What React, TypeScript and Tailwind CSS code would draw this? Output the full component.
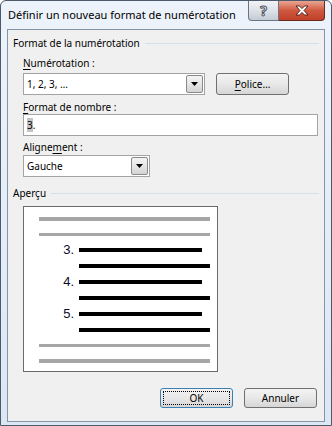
import React from 'react'

function Underline({ children }: { children: React.ReactNode }) {
  return <span className="underline underline-offset-2">{children}</span>
}

function DropArrow() {
  return (
    <div className="flex h-full w-[17px] items-center justify-center rounded-[2px] border border-[#8a8a8a] bg-gradient-to-b from-[#f4f4f4] via-[#e6e6e6] to-[#d4d4d4]">
      <svg width="7" height="4" viewBox="0 0 7 4">
        <path d="M0 0h7L3.5 4z" fill="#000" />
      </svg>
    </div>
  )
}

function Combo({ value, className }: { value: string; className: string }) {
  return (
    <div className={`flex h-[22px] items-stretch border border-[#a3a3a3] bg-white ${className}`}>
      <div className="flex flex-1 items-center pl-[3px]">{value}</div>
      <div className="py-px pr-px">
        <DropArrow />
      </div>
    </div>
  )
}

function GroupHeader({ title }: { title: string }) {
  return (
    <div className="flex h-4 items-center gap-[5px] leading-4">
      <span className="whitespace-nowrap">{title}</span>
      <div className="h-px flex-1 bg-[#d5dfe5]" />
    </div>
  )
}

function Bar({ tone }: { tone: 'gray' | 'black' }) {
  const color = tone === 'gray' ? 'bg-[#a6a6a6]' : 'bg-black'
  return <div className={`h-1 ${color}`} />
}

function NumberedRow({ n }: { n: number }) {
  return (
    <>
      <div className="flex h-1 items-center">
        <span className="w-[40px] pr-[5px] text-right font-['Liberation_Sans',sans-serif] text-[13px] leading-4 text-[#0c0c24]">
          {n}.
        </span>
        <div className="mr-2 h-1 flex-1 bg-black" />
      </div>
      <div className="ml-[40px] h-1 bg-black" />
    </>
  )
}

function WinButton({ children, focused }: { children: React.ReactNode; focused?: boolean }) {
  return (
    <div
      className={`flex h-[20px] w-[73px] items-center justify-center rounded-[3px] border bg-gradient-to-b from-[#f3f3f3] via-[#e8e8e8] to-[#d6d6d6] ${
        focused ? 'border-[#3c7fb1] p-[2px]' : 'border-[#707070]'
      }`}
    >
      {focused ? (
        <div className="flex h-full w-full items-center justify-center border border-dotted border-black">
          {children}
        </div>
      ) : (
        children
      )}
    </div>
  )
}

export default function App() {
  return (
    <div className="h-[426px] w-[332px] bg-white font-['Noto_Sans',sans-serif] text-[10px] text-black">
      <div className="flex h-full w-full flex-col rounded-t-[6px] border border-[#4c5a6b] bg-gradient-to-b from-[#edf3fb] to-[#dce7f4] px-[6px] pb-[3px]">
        {/* Title bar */}
        <div className="flex h-[28px] items-start justify-between">
          <div className="whitespace-nowrap pl-px pt-[6px] text-[11px] leading-4">
            Définir un nouveau format de numérotation
          </div>
          <div className="flex">
            <div className="flex h-[20px] w-[31px] items-center justify-center rounded-bl-[4px] border border-t-0 border-[#6a7684] bg-gradient-to-b from-[#f1f3f6] via-[#dde2e8] to-[#c3cbd5] text-[14px] font-bold leading-none text-white [-webkit-text-stroke:1px_#4a5260]">
              ?
            </div>
            <div className="flex h-[20px] w-[46px] items-center justify-center rounded-br-[4px] border border-l-0 border-t-0 border-[#6b2a20] bg-gradient-to-b from-[#e9a593] via-[#d0583f] to-[#c0402a]">
              <svg width="14" height="11" viewBox="0 0 14 11">
                <path
                  d="M1 1h3.5L7 3.6 9.5 1H13L9 5.5 13 10H9.5L7 7.4 4.5 10H1L5 5.5z"
                  fill="#fff"
                  stroke="#4a1a14"
                  strokeWidth="0.9"
                  strokeLinejoin="round"
                />
              </svg>
            </div>
          </div>
        </div>

        {/* Client area */}
        <div className="flex flex-1 flex-col border border-[#8595a8] bg-[#f0f0f0] px-[5px] pt-[5px]">
          <GroupHeader title="Format de la numérotation" />
          <div className="flex flex-col pl-[10px] pr-[1px]">
            <div className="mt-[5px] h-[14px] leading-[14px]">
              <Underline>N</Underline>umérotation :
            </div>
            <div className="mt-[3px] flex items-center">
              <Combo value="1, 2, 3, …" className="w-[182px]" />
              <div className="ml-[11px] flex h-[22px] w-[73px] items-center justify-center rounded-[3px] border border-[#707070] bg-gradient-to-b from-[#f3f3f3] via-[#e8e8e8] to-[#d6d6d6]">
                <span>
                  <Underline>P</Underline>olice…
                </span>
              </div>
            </div>
            <div className="mt-[5px] h-[14px] leading-[14px]">
              <Underline>F</Underline>ormat de nombre :
            </div>
            <div className="flex h-[22px] items-center border border-[#a3a3a3] bg-white pl-[3px]">
              <span className="bg-[#c4c4c4] leading-[14px]">3</span>
              <span className="leading-[14px]">.</span>
            </div>
            <div className="mt-[4px] h-[14px] leading-[14px]">
              Aligne<Underline>m</Underline>ent :
            </div>
            <Combo value="Gauche" className="mt-px w-[127px]" />
          </div>

          <div className="mt-[8px]">
            <GroupHeader title="Aperçu" />
          </div>

          <div className="ml-[10px] mt-[5px] flex h-[166px] w-[195px] flex-col gap-3 border border-[#6b6b6b] bg-white pb-2 pl-[15px] pr-[7px] pt-[10px]">
            <Bar tone="gray" />
            <Bar tone="gray" />
            <NumberedRow n={3} />
            <NumberedRow n={4} />
            <NumberedRow n={5} />
            <Bar tone="gray" />
            <Bar tone="gray" />
          </div>

          <div className="mt-[16px] flex justify-end gap-[11px] pr-[2px]">
            <WinButton focused>OK</WinButton>
            <WinButton>Annuler</WinButton>
          </div>
        </div>
      </div>
    </div>
  )
}
